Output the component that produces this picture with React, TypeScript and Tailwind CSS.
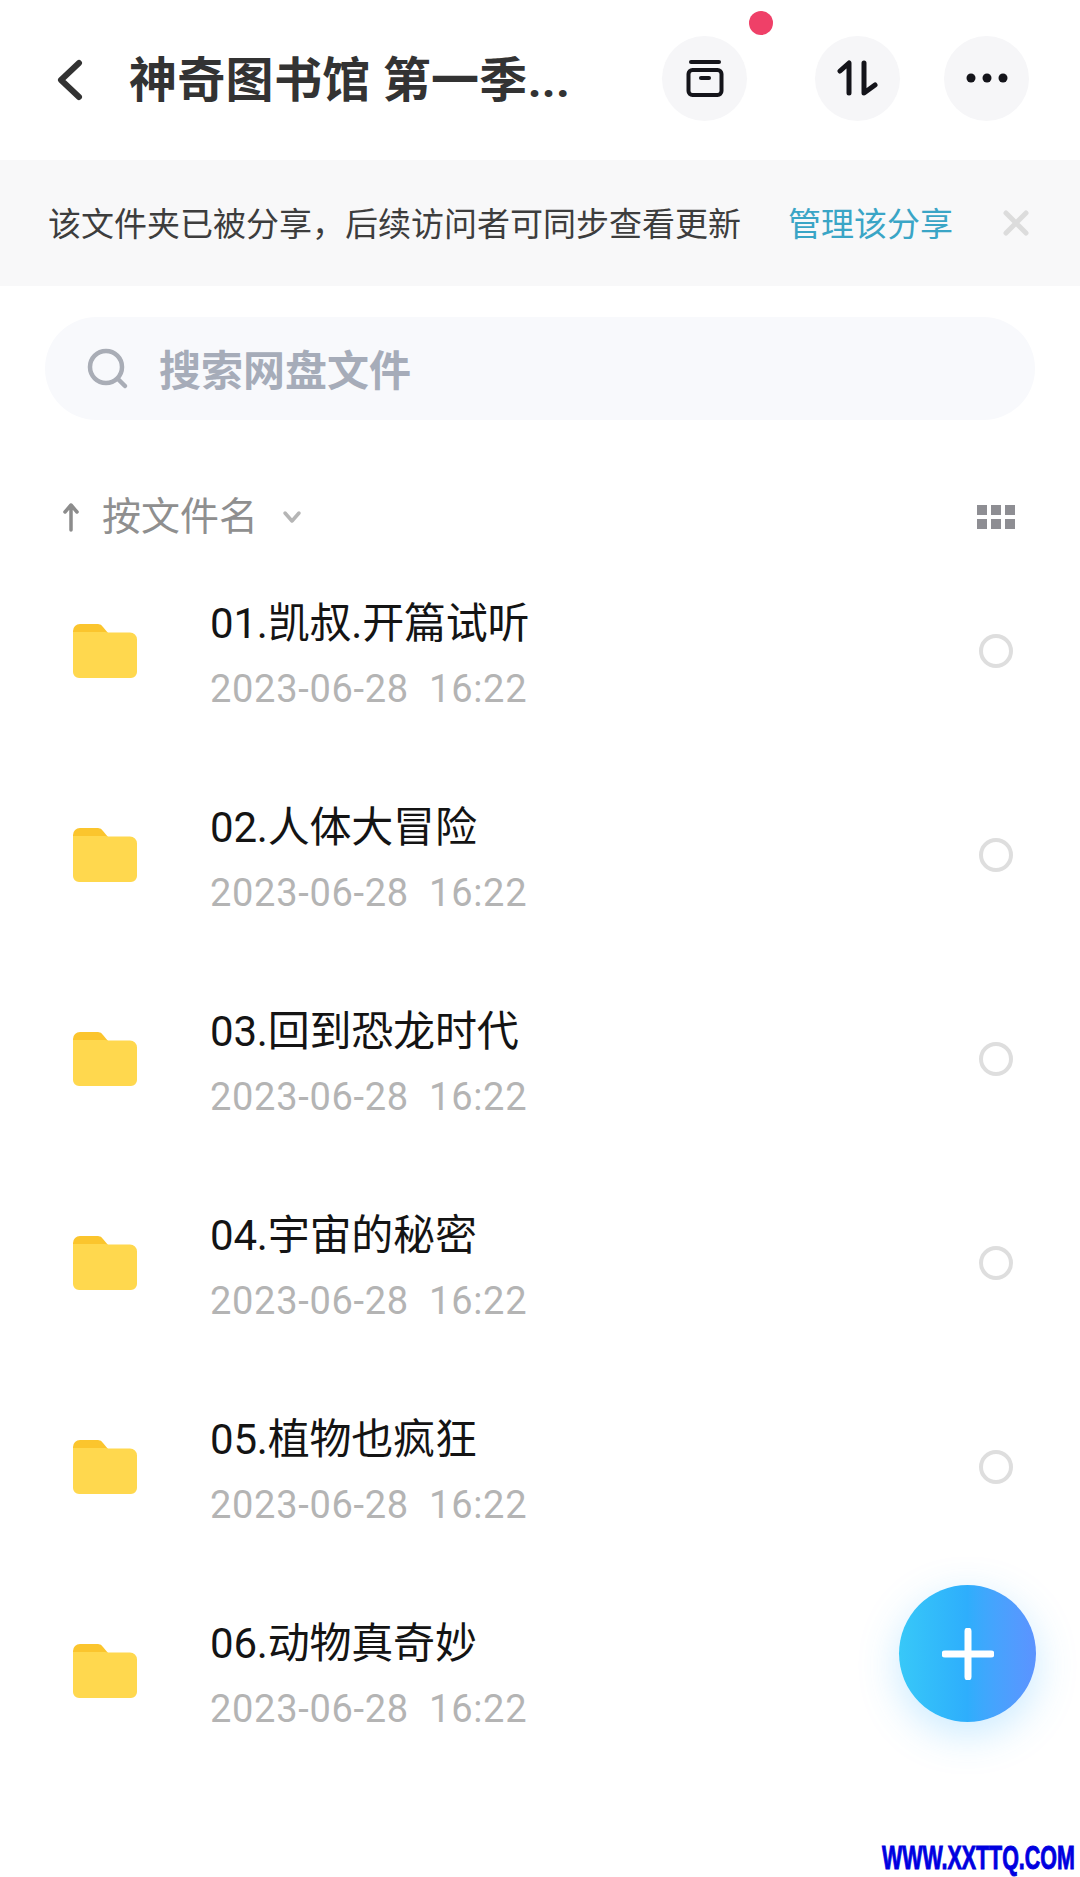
const files = [
  "01.凯叔.开篇试听",
  "02.人体大冒险",
  "03.回到恐龙时代",
  "04.宇宙的秘密",
  "05.植物也疯狂",
  "06.动物真奇妙",
]

function FolderIcon() {
  return (
    <svg width="64" height="56" viewBox="0 0 64 56" className="shrink-0">
      <path d="M0 8a7 7 0 0 1 7-7h18a6 6 0 0 1 5 3l5 6H8L0 14z" fill="#fbc52d" />
      <path d="M0 9h32l3 0.5h22a7 7 0 0 1 7 7V49a6 6 0 0 1-6 6H6a6 6 0 0 1-6-6z" fill="#ffd84e" />
    </svg>
  )
}

function CircleButton({ children, className }: { children: React.ReactNode; className: string }) {
  return (
    <div className={"flex h-[85px] w-[85px] items-center justify-center rounded-full bg-[#f6f6f8] " + className}>
      {children}
    </div>
  )
}

export default function App() {
  return (
    <div
      className="relative h-[1877px] w-[1080px] overflow-hidden bg-white"
      style={{ fontFamily: '"Roboto", "Noto Sans CJK SC", sans-serif' }}
    >
      {/* top bar */}
      <div className="flex h-[160px] items-center">
        <svg width="30" height="42" viewBox="0 0 30 42" className="ml-[54px] shrink-0">
          <path d="M25 4 L7 21 L25 38" fill="none" stroke="#333" strokeWidth="6" strokeLinecap="round" strokeLinejoin="round" />
        </svg>
        <span className="ml-[45px] w-[470px] pt-[2px] whitespace-nowrap text-[48px] leading-none font-bold tracking-[0.3px] text-[#333]">
          神奇图书馆 第一季...
        </span>
        <CircleButton className="relative -mt-[4px] ml-[63px]">
          <span className="absolute -top-[25px] left-[87px] h-[24px] w-[24px] rounded-full bg-[#ef4068]" />
          <svg width="38" height="38" viewBox="0 0 38 38">
            <path d="M5 3h28" stroke="#14141a" strokeWidth="4" strokeLinecap="round" />
            <rect x="2.5" y="11" width="33" height="25" rx="4" fill="none" stroke="#14141a" strokeWidth="4" />
            <path d="M15 19h8" stroke="#14141a" strokeWidth="4" strokeLinecap="round" />
          </svg>
        </CircleButton>
        <CircleButton className="-mt-[4px] ml-[68px]">
          <svg width="42" height="36" viewBox="0 0 42 36">
            <path d="M3 11 L12 3 V33" fill="none" stroke="#14141a" strokeWidth="5" strokeLinecap="round" strokeLinejoin="round" />
            <path d="M27 3 V33 L38 25" fill="none" stroke="#14141a" strokeWidth="5" strokeLinecap="round" strokeLinejoin="round" />
          </svg>
        </CircleButton>
        <CircleButton className="-mt-[4px] ml-[44px]">
          <svg width="44" height="12" viewBox="0 0 44 12">
            <circle cx="6" cy="6" r="4.5" fill="#14141a" />
            <circle cx="22" cy="6" r="4.5" fill="#14141a" />
            <circle cx="38" cy="6" r="4.5" fill="#14141a" />
          </svg>
        </CircleButton>
      </div>

      {/* share notice */}
      <div className="flex h-[126px] items-center bg-[#f8f8f9] pl-[48px]">
        <span className="w-[740px] pt-[2px] text-[33px] leading-none whitespace-nowrap text-[#3d3d3d]">
          该文件夹已被分享，后续访问者可同步查看更新
        </span>
        <span className="w-[215px] pt-[2px] text-[33px] leading-none whitespace-nowrap text-[#3aa5c6]">管理该分享</span>
        <svg width="26" height="26" viewBox="0 0 26 26">
          <path d="M3 3 L23 23 M23 3 L3 23" stroke="#dcdcdc" strokeWidth="5" strokeLinecap="round" />
        </svg>
      </div>

      {/* search */}
      <div className="mx-[45px] mt-[31px] flex h-[103px] items-center rounded-full bg-[#f8f9fc] pl-[42px]">
        <svg width="42" height="42" viewBox="0 0 42 42" className="shrink-0">
          <circle cx="19" cy="19" r="16" fill="none" stroke="#a9adb6" strokeWidth="4.5" />
          <path d="M31 31 L38 38" stroke="#a9adb6" strokeWidth="4.5" strokeLinecap="round" />
        </svg>
        <span className="ml-[30px] pt-[6px] text-[42px] leading-none font-bold text-[#a6acb9]">搜索网盘文件</span>
      </div>

      {/* sort row */}
      <div className="mt-[65px] flex h-[64px] items-center pr-[65px] pl-[62px]">
        <svg width="18" height="30" viewBox="0 0 18 30">
          <path d="M9 28 V3 M3 10 L9 3 L15 10" fill="none" stroke="#8c8c8c" strokeWidth="3.5" strokeLinecap="round" strokeLinejoin="round" />
        </svg>
        <span className="ml-[22px] text-[39px] leading-none text-[#8f8f8f]">按文件名</span>
        <svg width="20" height="14" viewBox="0 0 20 14" className="ml-[24px]">
          <path d="M3 3 L10 11 L17 3" fill="none" stroke="#b5b5b5" strokeWidth="3.5" strokeLinecap="round" strokeLinejoin="round" />
        </svg>
        <div className="ml-auto grid grid-cols-3 gap-x-[4px] gap-y-[4px]">
          {[0, 1, 2, 3, 4, 5].map((n) => (
            <span key={n} className="h-[10px] w-[10px] bg-[#8e8e93]" />
          ))}
        </div>
      </div>

      {/* folders */}
      <div className="flex flex-col">
        {files.map((name, i) => (
          <div key={name} className="flex h-[204px] items-center pr-[67px] pl-[73px]">
            <FolderIcon />
            <div className="ml-[73px] pt-[10px]">
              <div className="text-[42px] leading-[50px] tracking-[-0.2px] whitespace-nowrap text-[#141414]">{name}</div>
              <div className="mt-[15px] text-[38px] leading-[50px] tracking-[0.7px] whitespace-pre text-[#b4b4b4]">
                2023-06-28  16:22
              </div>
            </div>
            {i < 5 && <span className="ml-auto h-[34px] w-[34px] rounded-full border-[4px] border-[#dedede]" />}
          </div>
        ))}
      </div>

      {/* add button */}
      <div className="absolute top-[1585px] left-[899px] flex h-[137px] w-[137px] items-center justify-center rounded-full bg-gradient-to-r from-[#38c8f8] via-[#2eaefc] to-[#5b93ff] shadow-[0_12px_40px_rgba(60,180,255,0.28)]">
        <svg width="52" height="52" viewBox="0 0 52 52">
          <path d="M26 3 V49 M3 26 H49" stroke="#fff" strokeWidth="7" strokeLinecap="round" />
        </svg>
      </div>

      {/* watermark */}
      <span
        className="absolute top-[1840px] left-[882px] origin-left scale-x-[0.63] text-[34px] leading-[34px] font-bold whitespace-nowrap text-[#0000e0]"
        style={{ fontFamily: '"Liberation Sans", sans-serif', WebkitTextStroke: "1px #0000e0" }}
      >
        WWW.XXTTQ.COM
      </span>
    </div>
  )
}
